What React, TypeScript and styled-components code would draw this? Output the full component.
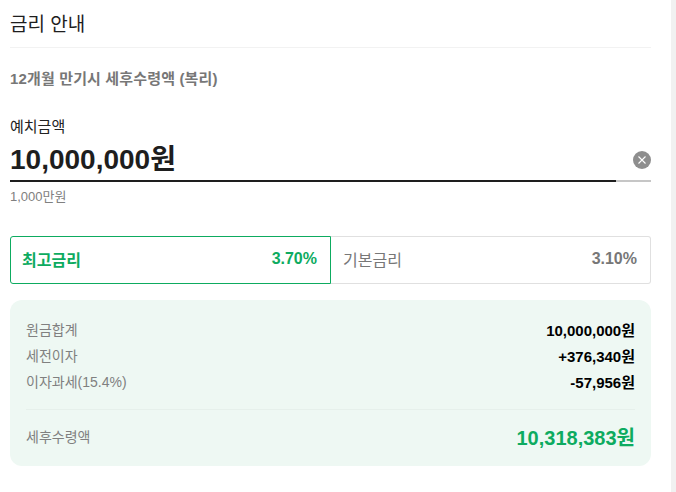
import React from "react";
import styled, { createGlobalStyle } from "styled-components";

const Global = createGlobalStyle`
  html, body { margin: 0; padding: 0; background: #fff; overflow: hidden; }
  body { font-family: "Liberation Sans", "Noto Sans CJK KR", sans-serif; }
`;

const Page = styled.div`
  display: flex;
  width: 676px;
  height: 492px;
  overflow: hidden;
`;
const Content = styled.main`
  width: 671px;
  padding: 0 20px 0 10px;
  box-sizing: border-box;
`;
const Scrollbar = styled.div`
  width: 5px;
  background: #f1f1f1;
`;
const Header = styled.h1`
  margin: 0;
  padding-top: 3px;
  height: 44px;
  line-height: 43px;
  font-size: 19px;
  font-weight: 400;
  color: #1e1e1e;
  border-bottom: 1px solid #f2f2f2;
`;
const Subtitle = styled.p`
  margin: 0;
  padding-top: 21px;
  line-height: 20px;
  font-size: 15px;
  letter-spacing: 0.15px;
  font-weight: 700;
  color: #777;
`;
const Field = styled.div`
  margin-top: 30px;
`;
const FieldLabel = styled.label`
  display: block;
  font-size: 15px;
  line-height: 16px;
  color: #222;
`;
const InputRow = styled.div`
  display: flex;
  align-items: center;
  justify-content: space-between;
  height: 36px;
  margin-top: 7px;
`;
const Amount = styled.span`
  font-size: 28px;
  font-weight: 700;
  line-height: 36px;
  color: #1e1e1e;
`;
const ClearButton = styled.button`
  display: flex;
  align-items: center;
  justify-content: center;
  width: 18px;
  height: 18px;
  padding: 0;
  border: 0;
  border-radius: 50%;
  background: #8e8e8e;
`;
const Track = styled.div`
  height: 2px;
  margin-top: 2px;
  background: #c6c6c6;
`;
const TrackFill = styled.div`
  height: 2px;
  background: #1e1e1e;
`;
const Hint = styled.div`
  margin-top: 7px;
  font-size: 13px;
  line-height: 15px;
  color: #808080;
`;
const Tabs = styled.div`
  display: grid;
  grid-template-columns: 321px 320px;
  margin-top: 32px;
  height: 48px;
`;
const Tab = styled.div<{ $active?: boolean }>`
  display: flex;
  align-items: center;
  justify-content: space-between;
  box-sizing: border-box;
  padding: 0 13px 2px ${(p) => (p.$active ? "11px" : "12px")};
  font-size: 16px;
  color: ${(p) => (p.$active ? "#0dab60" : "#777")};
  border: 1px solid ${(p) => (p.$active ? "#0dab60" : "#e0e0e0")};
  border-left-width: ${(p) => (p.$active ? "1px" : "0")};
  border-radius: ${(p) => (p.$active ? "3px 0 0 3px" : "0 3px 3px 0")};
`;
const TabName = styled.span<{ $active?: boolean }>`
  font-weight: ${(p) => (p.$active ? 700 : 400)};
`;
const TabRate = styled.strong`
  font-size: 16px;
  font-weight: 700;
`;
const Summary = styled.section`
  margin-top: 16px;
  padding: 16px 16px 0;
  height: 166px;
  box-sizing: border-box;
  border-radius: 12px;
  background: #eef8f3;
`;
const Row = styled.div`
  display: flex;
  align-items: center;
  justify-content: space-between;
  height: 26px;
`;
const RowLabel = styled.span`
  font-size: 14px;
  color: #808080;
`;
const RowValue = styled.span`
  font-size: 15px;
  font-weight: 700;
  color: #000;
`;
const Divider = styled.hr`
  margin: 15px 0 0;
  border: 0;
  border-top: 1px solid #e6f0eb;
`;
const TotalRow = styled.div`
  display: flex;
  align-items: center;
  justify-content: space-between;
  height: 52px;
`;
const TotalValue = styled.span`
  font-size: 20px;
  font-weight: 700;
  color: #0dab60;
`;

const rows = [
  ["원금합계", "10,000,000원"],
  ["세전이자", "+376,340원"],
  ["이자과세(15.4%)", "-57,956원"],
];

export default function App() {
  return (
    <Page>
      <Global />
      <Content>
        <Header>금리 안내</Header>
        <Subtitle>12개월 만기시 세후수령액 (복리)</Subtitle>
        <Field>
          <FieldLabel>예치금액</FieldLabel>
          <InputRow>
            <Amount>10,000,000원</Amount>
            <ClearButton aria-label="지우기">
              <svg width="10" height="10" viewBox="0 0 10 10" fill="none">
                <path d="M1.5 1.5l7 7M8.5 1.5l-7 7" stroke="#fff" strokeWidth="1.1" />
              </svg>
            </ClearButton>
          </InputRow>
          <Track>
            <TrackFill style={{ width: "606px" }} />
          </Track>
          <Hint>1,000만원</Hint>
        </Field>
        <Tabs>
          <Tab $active>
            <TabName $active>최고금리</TabName>
            <TabRate>3.70%</TabRate>
          </Tab>
          <Tab>
            <TabName>기본금리</TabName>
            <TabRate>3.10%</TabRate>
          </Tab>
        </Tabs>
        <Summary>
          {rows.map(([label, value]) => (
            <Row key={label}>
              <RowLabel>{label}</RowLabel>
              <RowValue>{value}</RowValue>
            </Row>
          ))}
          <Divider />
          <TotalRow>
            <RowLabel>세후수령액</RowLabel>
            <TotalValue>10,318,383원</TotalValue>
          </TotalRow>
        </Summary>
      </Content>
      <Scrollbar />
    </Page>
  );
}
